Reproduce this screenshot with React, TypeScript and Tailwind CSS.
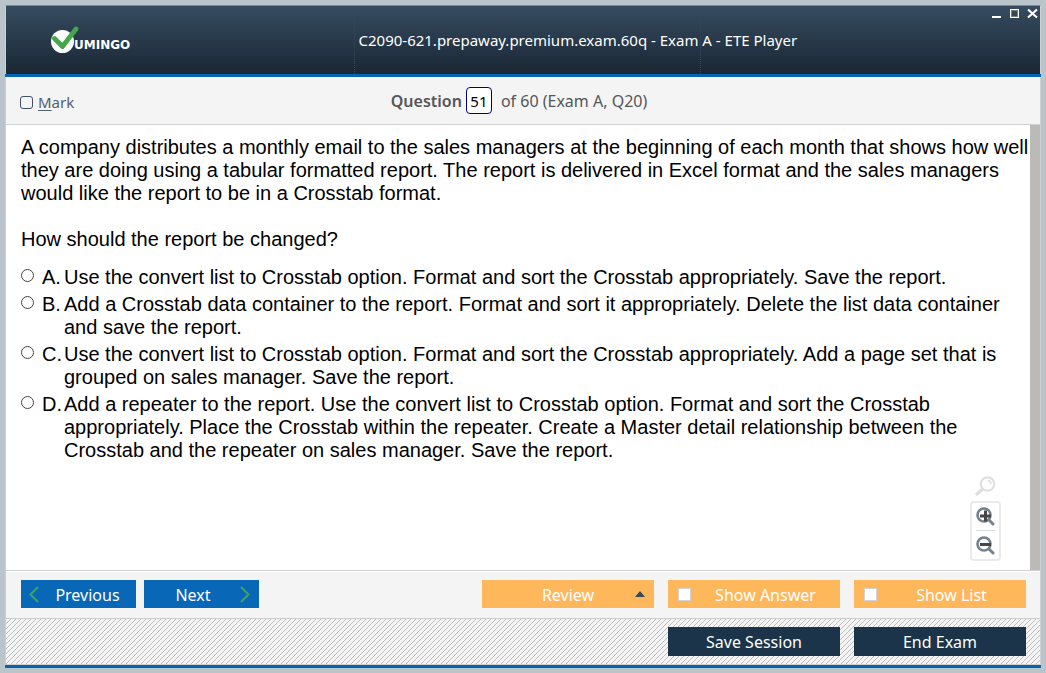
import { useState, type ReactNode } from "react";

const uiFont = "font-['Noto_Sans','Open_Sans',sans-serif]";

const options = [
  {
    letter: "A",
    text: "Use the convert list to Crosstab option. Format and sort the Crosstab appropriately. Save the report.",
  },
  {
    letter: "B",
    text: "Add a Crosstab data container to the report. Format and sort it appropriately. Delete the list data container and save the report.",
  },
  {
    letter: "C",
    text: "Use the convert list to Crosstab option. Format and sort the Crosstab appropriately. Add a page set that is grouped on sales manager. Save the report.",
  },
  {
    letter: "D",
    text: "Add a repeater to the report. Use the convert list to Crosstab option. Format and sort the Crosstab appropriately. Place the Crosstab within the repeater. Create a Master detail relationship between the Crosstab and the repeater on sales manager. Save the report.",
  },
];

function Logo() {
  return (
    <div className="flex items-center pl-[44px]">
      <svg width="29" height="28" viewBox="0 0 29 28" aria-hidden="true">
        <circle cx="12.5" cy="15.500" r="11.500" fill="#fff" />
        <path d="M4.500 12.500 L12.500 20.500 L26 3" fill="none" stroke="#43a648" strokeWidth="4.800" strokeLinecap="round" strokeLinejoin="round" />
      </svg>
      <span className="-ml-[5px] pt-[10px] font-['DejaVu_Sans',sans-serif] text-[12px] leading-4 font-bold text-white">UMINGO</span>
    </div>
  );
}

function WindowControls() {
  return (
    <div className="flex items-start justify-end gap-1 pr-px">
      <button aria-label="Minimize" className="flex size-[14px] items-center justify-center">
        <svg width="9" height="12" viewBox="0 0 9 12" shapeRendering="crispEdges">
          <path d="M0 9h9v2H0z" fill="#fff" />
        </svg>
      </button>
      <button aria-label="Maximize" className="flex size-[14px] items-center justify-center">
        <svg width="9" height="12" viewBox="0 0 9 12" shapeRendering="crispEdges">
          <rect x="0.5" y="2.5" width="8" height="8" fill="none" stroke="#fff" />
          <rect x="1.5" y="3.5" width="6" height="6" fill="none" stroke="#807d7a" />
        </svg>
      </button>
      <button aria-label="Close" className="flex size-[14px] items-center justify-center">
        <svg width="11" height="12" viewBox="0 0 11 12">
          <path d="M1 2.500 L10 10.500 M10 2.500 L1 10.500" stroke="#fff" strokeWidth="2.200" />
        </svg>
      </button>
    </div>
  );
}

function Magnifier({ sign }: { sign: "plus" | "minus" }) {
  return (
    <svg width="19" height="19" viewBox="0 0 19 19" aria-hidden="true">
      <circle cx="8" cy="8" r="6.500" fill="none" stroke="#74828d" strokeWidth="2.600" />
      <path d="M13 13 L17 17" stroke="#74828d" strokeWidth="3" strokeLinecap="round" />
      {sign === "plus" ? (
        <path d="M4 9h11M9.500 3.500v11" stroke="#464646" strokeWidth="3" />
      ) : (
        <path d="M4 8.500h11" stroke="#464646" strokeWidth="3" />
      )}
    </svg>
  );
}

function ToggleButton({ id, children }: { id: string; children: ReactNode }) {
  return (
    <label htmlFor={id} className="flex h-7 w-[172px] items-center bg-[#ffb75b] pl-[10px] text-white">
      <input id={id} type="checkbox" className="size-[13px] shrink-0 appearance-none border border-[#d3d3d3] bg-white checked:bg-[#1b344a]" />
      <span className="flex-1 pt-[2px] text-center">{children}</span>
    </label>
  );
}

export default function App() {
  const [answer, setAnswer] = useState("");
  const [number, setNumber] = useState("51");

  return (
    <div className="flex min-h-screen flex-col bg-[#b9c5cb] p-[5px]">
      <div className="flex flex-1 flex-col border border-b-0 border-[#cfcfcf] border-t-[#7c8c93] bg-[#f4f4f4]">
        <header className={`${uiFont} grid h-[68px] grid-cols-[minmax(0,1fr)_minmax(0,1fr)_339px] bg-linear-to-b from-[#364c60] to-[#1a2735]`}>
          <Logo />
          <h1 className="flex items-center border-x border-dotted border-[#34466b] pl-1 text-[15px] whitespace-nowrap text-white">
            C2090-621.prepaway.premium.exam.60q - Exam A - ETE Player
          </h1>
          <WindowControls />
        </header>
        <div className="-mx-px h-[3px] bg-[#0563b2]" />

        <div className={`${uiFont} grid h-[47px] grid-cols-[1fr_auto_1fr] items-center px-[14px] text-[#54565a]`}>
          <label htmlFor="mark" className="flex items-center gap-[5px] pt-1 text-[15px] text-[#50606e]">
            <input id="mark" type="checkbox" className="size-[13px] appearance-none rounded-[3px] border border-[#3d5265] checked:bg-[#3d5265]" />
            <span>
              <span className="underline underline-offset-2">M</span>ark
            </span>
          </label>
          <div className="flex items-center pr-2 text-base">
            <label htmlFor="question" className="font-semibold">Question</label>
            <input
              id="question"
              value={number}
              onChange={(e) => setNumber(e.target.value)}
              className="mr-[9px] ml-1 h-[27px] w-[26px] rounded-[4px] border border-[#00007c] bg-white text-center text-[15px] text-black"
            />
            <span>of 60 (Exam A, Q20)</span>
          </div>
        </div>

        <div className="flex flex-1 border-y border-[#d0d0d0] bg-white">
          <main className="flex flex-1 flex-col pt-[11px] pl-[15px] font-['Liberation_Sans',Arial,sans-serif] text-[20px] leading-[23px] text-black">
            <p>
              A company distributes a monthly email to the sales managers at the beginning of each month that shows how well they are doing using a tabular formatted report. The report is delivered in Excel format and the sales managers would like the report to be in a Crosstab format.
            </p>
            <p className="pt-[23px]">How should the report be changed?</p>
            <div role="radiogroup" aria-label="Answers" className="flex flex-col gap-1 pt-[15px]">
              {options.map((o) => (
                <label key={o.letter} className="flex items-start">
                  <input
                    type="radio"
                    name="answer"
                    value={o.letter}
                    checked={answer === o.letter}
                    onChange={() => setAnswer(o.letter)}
                    className="mt-[3px] size-[13px] shrink-0 appearance-none rounded-full border border-[#444] bg-white checked:border-4"
                  />
                  <span className="ml-2 w-[22px] shrink-0 whitespace-nowrap">{o.letter}.</span>
                  <span>{o.text}</span>
                </label>
              ))}
            </div>
            <div className="mt-auto mr-[29px] mb-[9px] flex flex-col items-center gap-1 self-end">
              <svg width="21" height="21" viewBox="0 0 21 21" aria-hidden="true">
                <circle cx="12.500" cy="8" r="6.700" fill="none" stroke="#dfdfdf" strokeWidth="2.200" />
                <path d="M7 13.500 L2.200 18" stroke="#dfdfdf" strokeWidth="3.400" strokeLinecap="round" />
                <path d="M12.500 4.500 A3.500 3.500 0 0 1 16 8" fill="none" stroke="#dfdfdf" strokeWidth="1.600" />
              </svg>
              <div className="flex flex-col items-center rounded-[4px] border-2 border-[#eaeaea] px-[4px]">
                <button aria-label="Zoom in" className="flex h-[28px] items-center border-b border-[#dcdcdc]">
                  <Magnifier sign="plus" />
                </button>
                <button aria-label="Zoom out" className="flex h-[28px] items-center">
                  <Magnifier sign="minus" />
                </button>
              </div>
            </div>
          </main>
          <div className="w-[10px] bg-[#bcbab6]" />
        </div>

        <div className={`${uiFont} flex h-[47px] items-center justify-between border-t border-white pr-[14px] pb-[2px] pl-[15px] text-base text-white`}>
          <div className="flex gap-2">
            <button className="flex h-7 w-[115px] items-center bg-[#0867b6] pl-2">
              <svg width="10" height="17" viewBox="0 0 10 17" aria-hidden="true">
                <path d="M9 1 L1.500 8.500 L9 16" fill="none" stroke="#43a648" strokeWidth="2" />
              </svg>
              <span className="flex-1 pt-[2px] text-center">Previous</span>
            </button>
            <button className="flex h-7 w-[115px] items-center bg-[#0867b6] pr-[9px]">
              <span className="flex-1 pt-[2px] pl-[2px] text-center">Next</span>
              <svg width="10" height="17" viewBox="0 0 10 17" aria-hidden="true">
                <path d="M1 1 L8.500 8.500 L1 16" fill="none" stroke="#43a648" strokeWidth="2" />
              </svg>
            </button>
          </div>
          <div className="flex gap-[14px]">
            <button className="flex h-7 w-[172px] items-center bg-[#ffb75b] pr-[9px] pl-[19px]">
              <span className="flex-1 pt-[2px] text-center">Review</span>
              <svg width="10" height="6" viewBox="0 0 10 6" aria-hidden="true">
                <path d="M0 6 L5 0 L10 6z" fill="#34495c" />
              </svg>
            </button>
            <ToggleButton id="show-answer">Show Answer</ToggleButton>
            <ToggleButton id="show-list">Show List</ToggleButton>
          </div>
        </div>

        <footer
          className={`${uiFont} flex h-[47px] items-center justify-end gap-[14px] border-y border-[#cccccc] bg-[linear-gradient(135deg,#f4f4f4_45%,#bdbdbd_45%,#bdbdbd_55%,#f4f4f4_55%)] bg-size-[5px_5px] px-[14px] text-base text-white`}
        >
          <button className="h-[29px] w-[172px] bg-[#1b344a]">Save Session</button>
          <button className="h-[29px] w-[172px] bg-[#1b344a]">End Exam</button>
        </footer>
        <div className="-mx-px h-[3px] bg-[#0563b2]" />
      </div>
    </div>
  );
}
